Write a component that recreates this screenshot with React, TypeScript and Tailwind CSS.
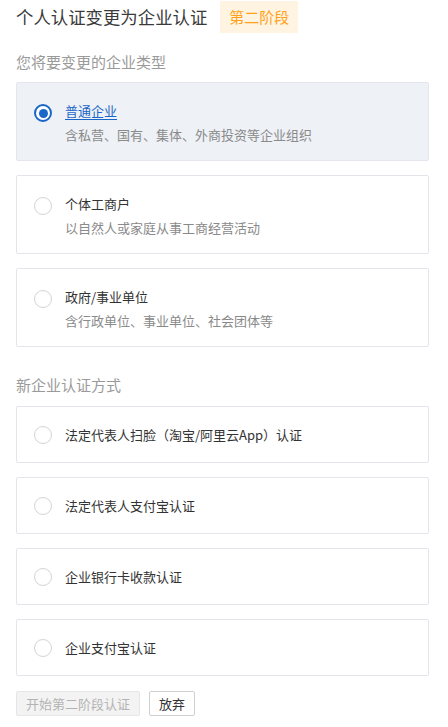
import React from "react";

const font = { fontFamily: '"Noto Sans CJK SC", "Noto Sans", sans-serif' };

function Radio({ checked }: { checked?: boolean }) {
  return checked ? (
    <span className="flex h-[18px] w-[18px] shrink-0 items-center justify-center rounded-full border-2 border-[#1a66c9] bg-white">
      <span className="h-[9px] w-[9px] rounded-full bg-[#1a66c9]" />
    </span>
  ) : (
    <span className="block h-[18px] w-[18px] shrink-0 rounded-full border border-[#d4d4d4] bg-white" />
  );
}

const types = [
  { title: "普通企业", desc: "含私营、国有、集体、外商投资等企业组织", checked: true },
  { title: "个体工商户", desc: "以自然人或家庭从事工商经营活动" },
  { title: "政府/事业单位", desc: "含行政单位、事业单位、社会团体等" },
];

const methods = [
  "法定代表人扫脸（淘宝/阿里云App）认证",
  "法定代表人支付宝认证",
  "企业银行卡收款认证",
  "企业支付宝认证",
];

export default function App() {
  return (
    <div className="min-h-[727px] bg-white pl-4 pr-[19px] pt-px" style={font}>
      <div className="flex h-8 items-center gap-[13px]">
        <span className="text-[17.4px] leading-8 text-[#3a3a3a]">个人认证变更为企业认证</span>
        <span className="bg-[#fff4e2] px-[9px] text-[15px] leading-8 text-[#ffa21a]">第二阶段</span>
      </div>
      <div className="mt-[18px] text-[15px] leading-[22px] text-[#9a9a9a]">您将要变更的企业类型</div>
      <div className="mt-[9px] flex flex-col gap-[14px]">
        {types.map((t) => (
          <div
            key={t.title}
            className={`flex h-[79px] items-start gap-[13px] rounded-[2px] border pl-[17px] pt-[18px] ${
              t.checked ? "border-[#e3e6ed] bg-[#eef1f6]" : "border-[#e4e4ea] bg-white"
            }`}
          >
            <div className="pt-[3px]">
              <Radio checked={t.checked} />
            </div>
            <div className="flex flex-col gap-[4px]">
              <span
                className={`text-[13px] leading-5 ${
                  t.checked ? "text-[#1a66c9] underline underline-offset-[3px]" : "text-[#333]"
                }`}
              >
                {t.title}
              </span>
              <span className="text-[13px] leading-5 text-[#8a8a8a]">{t.desc}</span>
            </div>
          </div>
        ))}
      </div>
      <div className="mt-[27px] text-[15px] leading-[22px] text-[#9a9a9a]">新企业认证方式</div>
      <div className="mt-[10px] flex flex-col gap-[14px]">
        {methods.map((m) => (
          <div
            key={m}
            className="flex h-[57px] items-center gap-[13px] rounded-[2px] border border-[#e4e4ea] bg-white pl-[17px]"
          >
            <Radio />
            <span className="text-[13px] leading-5 text-[#333]">{m}</span>
          </div>
        ))}
      </div>
      <div className="mt-[15px] flex gap-[9px]">
        <button className="h-[25px] rounded-[2px] border border-[#e6e6e6] bg-[#f3f3f3] px-[9px] text-[13px] leading-[23px] text-[#b3b3b3]">
          开始第二阶段认证
        </button>
        <button className="h-[25px] rounded-[2px] border border-[#d0d0d0] bg-white px-[9px] text-[13px] leading-[23px] text-[#333]">
          放弃
        </button>
      </div>
    </div>
  );
}
